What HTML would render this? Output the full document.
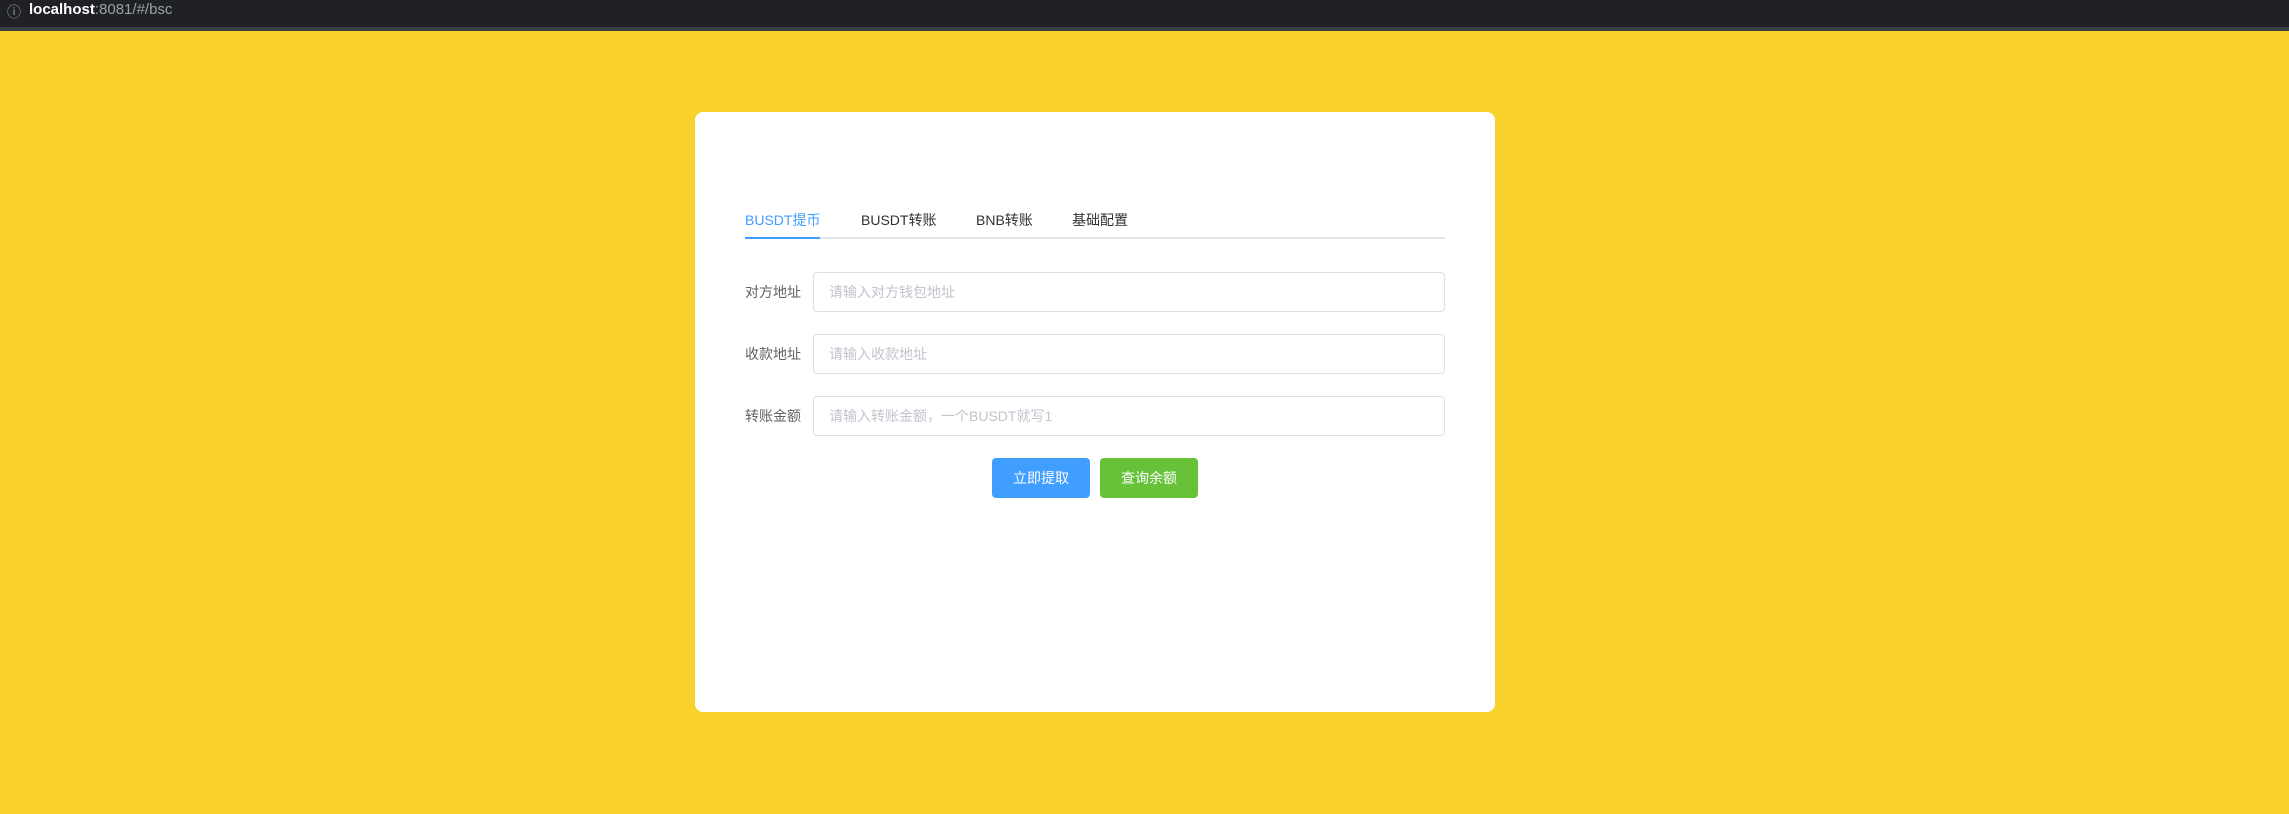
<!DOCTYPE html>
<html><head><meta charset="utf-8"><style>
*{margin:0;padding:0;box-sizing:border-box}
body{width:2289px;height:814px;background:#f8d12d;position:relative;overflow:hidden;font-family:"Liberation Sans","Noto Sans CJK SC",sans-serif}
.bar{position:absolute;left:0;top:0;width:2289px;height:27px;background:#202124;color:#9aa0a6;font-size:15px;line-height:22px}
.bar2{position:absolute;left:0;top:27px;width:2289px;height:4px;background:#3c3d40}
.card{position:absolute;left:695px;top:112px;width:800px;height:600px;background:#fff;border-radius:8px}
.tab{position:absolute;top:210px;font-size:14px;color:#303133;line-height:20px}
.line{position:absolute;left:745px;top:237px;width:700px;height:2px;background:#e4e7ed}
.act{position:absolute;left:745px;top:237px;width:75px;height:2px;background:#409eff}
.lab{position:absolute;left:745px;font-size:14px;color:#606266;line-height:20px}
.inp{position:absolute;left:813px;width:632px;height:40px;border:1px solid #dcdfe6;border-radius:4px;font-size:14px;color:#c0c4cc;line-height:38px;padding-left:15px}
.btn{position:absolute;top:458px;height:40px;width:98px;border-radius:4px;color:#fff;font-size:14px;line-height:40px;text-align:center}
</style></head><body>
<div class="bar"><span style="position:absolute;left:7px;top:1px;font-size:14px">ⓘ</span><span style="position:absolute;left:29px;top:-1px"><b style="color:#fff;font-weight:bold">localhost</b>:8081/#/bsc</span></div>
<div class="bar2"></div>
<div class="card"></div>
<div class="tab" style="left:745px;color:#409eff">BUSDT提币</div>
<div class="tab" style="left:861px">BUSDT转账</div>
<div class="tab" style="left:976px">BNB转账</div>
<div class="tab" style="left:1072px">基础配置</div>
<div class="line"></div><div class="act"></div>
<div class="lab" style="top:282px">对方地址</div>
<div class="inp" style="top:272px">请输入对方钱包地址</div>
<div class="lab" style="top:344px">收款地址</div>
<div class="inp" style="top:334px">请输入收款地址</div>
<div class="lab" style="top:406px">转账金额</div>
<div class="inp" style="top:396px">请输入转账金额，一个BUSDT就写1</div>
<div class="btn" style="left:992px;background:#409eff">立即提取</div>
<div class="btn" style="left:1100px;background:#67c23a">查询余额</div>
</body></html>
